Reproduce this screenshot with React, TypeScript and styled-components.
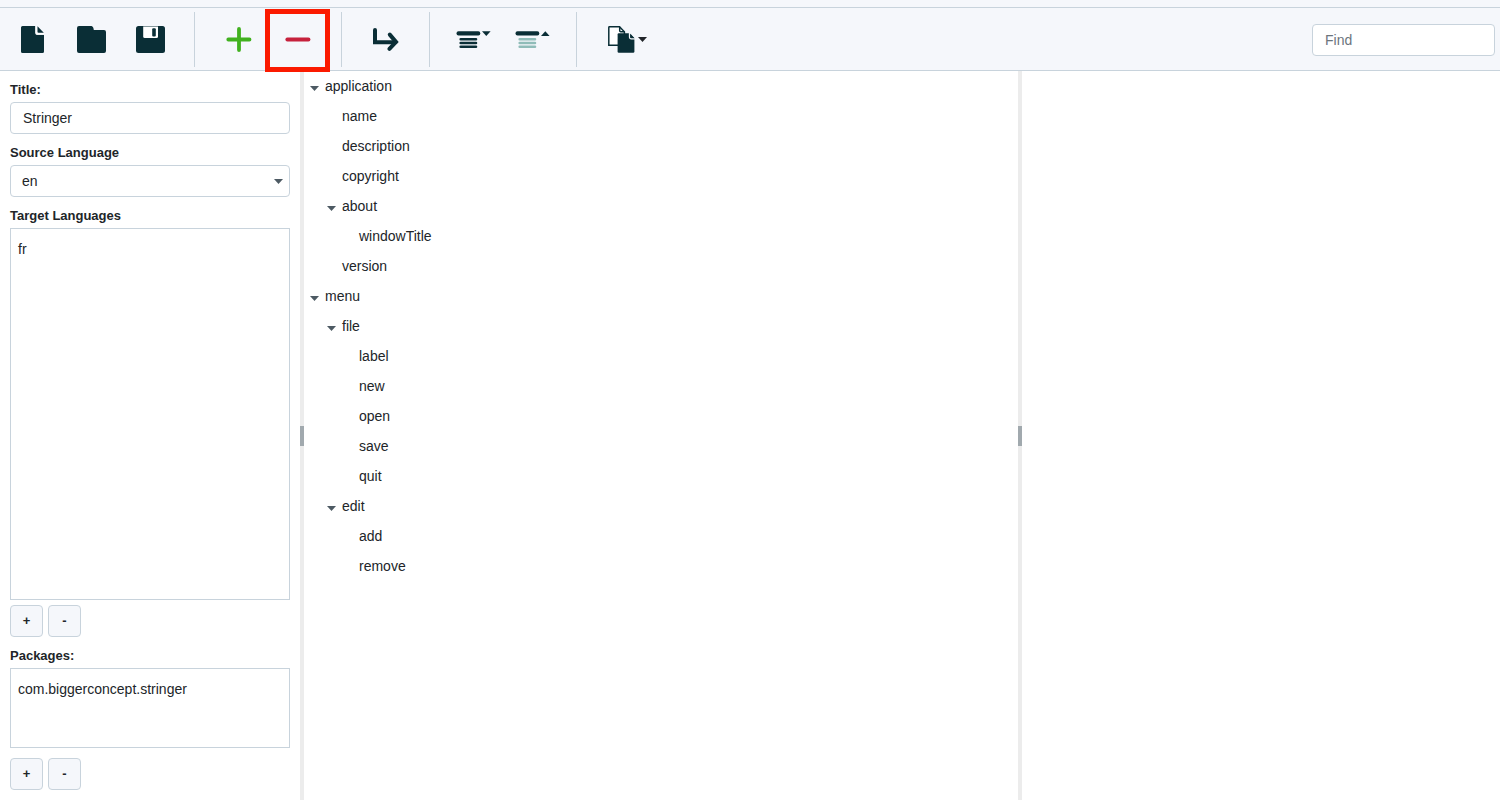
import React, { useState } from "react";
import styled, { createGlobalStyle, css } from "styled-components";

const line = "#c8d3dc";
const panel = "#f5f7fb";
const ink = "#212529";
const dark = "#0a2e36";
const mint = "#8fbcb8";

const GlobalStyle = createGlobalStyle`
  *, *::before, *::after { box-sizing: border-box; }
  body {
    margin: 0;
    background: #ffffff;
    color: ${ink};
    font-family: "Liberation Sans", Arial, sans-serif;
    font-size: 14px;
    line-height: 20px;
  }
  button, input, select { font: inherit; color: inherit; }
`;

const Page = styled.div`
  display: flex;
  flex-direction: column;
  min-height: 100vh;
`;

const TitleStrip = styled.div`
  height: 8px;
  background: ${panel};
  border-bottom: 1px solid ${line};
`;

const Toolbar = styled.header`
  display: flex;
  align-items: center;
  padding: 4px 5px 3px 3px;
  background: ${panel};
  border-bottom: 1px solid ${line};
`;

const ToolGroup = styled.div<{ $first?: boolean; $last?: boolean }>`
  display: flex;
  height: 55px;
  padding: 0 14px;
  ${(p) => p.$first && css`padding-left: 0;`}
  ${(p) => !p.$last && css`border-right: 1px solid ${line}; box-sizing: content-box;`}
`;

const ToolButton = styled.button<{ $wide?: boolean; $marked?: boolean }>`
  position: relative;
  display: flex;
  align-items: center;
  justify-content: center;
  gap: 2px;
  width: ${(p) => (p.$wide ? 73 : 59)}px;
  padding: 0;
  border: 0;
  background: none;
  cursor: pointer;

  ${(p) =>
    p.$marked &&
    css`
      &::after {
        content: "";
        position: absolute;
        z-index: 1;
        inset: -3px -3px -5px;
        border: 5px solid #fb1a00;
      }
    `}
`;

const fieldBox = css`
  height: 32px;
  border: 1px solid ${line};
  border-radius: 4px;
  background: #ffffff;
`;

const TextField = styled.input`
  ${fieldBox}
  width: 100%;
  padding: 0 12px;
  &::placeholder { color: #6c757d; opacity: 1; }
`;

const Search = styled.div`
  width: 183px;
  margin-left: auto;
`;

const Workspace = styled.div`
  flex: 1;
  display: grid;
  grid-template-columns: 300px 4px minmax(0, 1fr) 4px 478px;
`;

const Sidebar = styled.form`
  display: flex;
  flex-direction: column;
  padding: 0 10px 10px;
`;

const Label = styled.label`
  padding: 10px 0 3px;
  font-size: 13px;
  font-weight: bold;
  line-height: 18px;
`;

const SelectWrap = styled.div`
  position: relative;
  display: flex;
  svg { position: absolute; right: 7px; top: 14px; pointer-events: none; }
`;

const Select = styled.select`
  ${fieldBox}
  width: 100%;
  padding: 0 11px;
  appearance: none;
`;

const ListBox = styled.ul<{ $grow?: boolean }>`
  margin: 0;
  padding: 5px 7px;
  list-style: none;
  border: 1px solid ${line};
  ${(p) => (p.$grow ? css`flex: 1; min-height: 80px;` : css`height: 80px;`)}
`;

const ListItem = styled.li`
  line-height: 30px;
`;

const ButtonRow = styled.div<{ $space: number }>`
  display: flex;
  gap: 5px;
  padding-top: ${(p) => p.$space}px;
`;

const SmallButton = styled.button`
  ${fieldBox}
  width: 33px;
  padding: 0;
  background: ${panel};
  font-size: 13px;
  font-weight: bold;
`;

const Splitter = styled.div`
  display: flex;
  align-items: center;
  background: #ececec;
  cursor: col-resize;
  &::before {
    content: "";
    width: 4px;
    height: 20px;
    background: #a1a9ae;
  }
`;

const Tree = styled.ul`
  margin: 0;
  padding: 0 0 0 4px;
  list-style: none;
`;

const Branch = styled.ul`
  margin: 0;
  padding: 0 0 0 17px;
  list-style: none;
`;

const Row = styled.div`
  display: flex;
  align-items: center;
  height: 30px;
`;

const Toggle = styled.button<{ $open: boolean }>`
  display: flex;
  align-items: center;
  justify-content: center;
  width: 13px;
  height: 20px;
  margin-right: 4px;
  padding: 5px 0 0;
  border: 0;
  background: none;
  svg { transform: ${(p) => (p.$open ? "none" : "rotate(-90deg)")}; }
`;

const Leaf = styled.div`
  padding-left: 17px;
  line-height: 30px;
`;

const Caret = ({ color = "#4d5a63" }: { color?: string }) => (
  <svg width="9" height="5" viewBox="0 0 9 5" aria-hidden="true">
    <path d="M0 0H9L4.5 5Z" fill={color} />
  </svg>
);

const NewIcon = () => (
  <svg width="23" height="27" viewBox="0 0 23 27" aria-hidden="true">
    <path d="M1.5 0H14.5V7.2Q14.5 8.8 16 8.8H23V25.5Q23 27 21.5 27H1.5Q0 27 0 25.5V1.5Q0 0 1.5 0Z" fill={dark} />
    <path d="M15 0V6.7Q15 8 16.3 8H23" fill="none" stroke="#ffffff" strokeWidth="1.4" />
    <path d="M16.5 0.3L22.8 6.8H17.5Q16.5 6.8 16.5 5.8Z" fill={dark} />
  </svg>
);

const OpenIcon = () => (
  <svg width="29" height="27" viewBox="0 0 29 27" aria-hidden="true">
    <path d="M2 0H14.5Q16.5 0.4 16.8 4H27Q29 4 29 6V25Q29 27 27 27H2Q0 27 0 25V2Q0 0 2 0Z" fill={dark} />
  </svg>
);

const SaveIcon = () => (
  <svg width="29" height="27" viewBox="0 0 29 27" aria-hidden="true">
    <rect width="29" height="27" rx="2.5" fill={dark} />
    <path d="M7.2 0.5H22V10.5Q22 12 20.5 12H8.7Q7.2 12 7.2 10.5Z" fill="#ffffff" />
    <rect x="16.2" y="2.2" width="3.6" height="8.3" rx="1" fill={dark} />
  </svg>
);

const AddIcon = () => (
  <svg width="27" height="27" viewBox="0 0 27 27" aria-hidden="true">
    <path d="M14 3V24M3.3 13.5H24.5" fill="none" stroke="#41b11f" strokeWidth="3.8" strokeLinecap="round" />
  </svg>
);

const RemoveIcon = () => (
  <svg width="27" height="27" viewBox="0 0 27 27" aria-hidden="true">
    <path d="M3.3 13.5H24.5" fill="none" stroke="#c6213c" strokeWidth="3.8" strokeLinecap="round" />
  </svg>
);

const MoveIcon = () => (
  <svg width="27" height="27" viewBox="0 0 27 27" aria-hidden="true">
    <g fill="none" stroke={dark} strokeWidth="4" strokeLinecap="round">
      <path d="M3 4V16.3H23.5" />
      <path d="M17.8 8.6L24 15.9L17.4 22.8" />
    </g>
  </svg>
);

const LinesIcon = ({ up, color }: { up?: boolean; color: string }) => (
  <svg width="36" height="27" viewBox="0 0 36 27" aria-hidden="true">
    <rect x="0.5" y="5.3" width="23.8" height="4.2" rx="2" fill={dark} />
    <path d={up ? "M26 10H34.6L30.3 5.3Z" : "M26 5.3H34.6L30.3 10Z"} fill={dark} />
    <path d="M4.7 13.3H20M4.7 17H20M4.7 20.7H20" stroke={color} strokeWidth="2.6" strokeLinecap="round" />
  </svg>
);

const CopyIcon = () => (
  <svg width="28" height="27" viewBox="0 0 28 27" aria-hidden="true">
    <path d="M1.4 0.8H11.5L16.4 5.8V19.2H0.8V1.4Q0.8 0.8 1.4 0.8Z" fill="#ffffff" stroke={dark} strokeWidth="1.5" />
    <path d="M11.7 0.8V4.8Q11.7 5.8 12.7 5.8H16.4" fill="none" stroke={dark} strokeWidth="1.5" />
    <path d="M10.8 7.3H21.5L26.4 12.3V25.6Q26.4 26.8 25.2 26.8H10.8Q9.6 26.8 9.6 25.6V8.5Q9.6 7.3 10.8 7.3Z" fill={dark} />
    <path d="M21.5 6.5V11.3Q21.5 12.8 23 12.8H27" fill="none" stroke={panel} strokeWidth="1.3" />
    <path d="M21.9 6.4L27.4 12V6.4Z" fill={panel} />
    <path d="M22.4 7.8L26.3 11.9H23.2Q22.4 11.9 22.4 11.1Z" fill={dark} />
  </svg>
);

type Node = { name: string; children?: Node[] };

const strings: Node[] = [
  {
    name: "application",
    children: [
      { name: "name" },
      { name: "description" },
      { name: "copyright" },
      { name: "about", children: [{ name: "windowTitle" }] },
      { name: "version" },
    ],
  },
  {
    name: "menu",
    children: [
      {
        name: "file",
        children: [{ name: "label" }, { name: "new" }, { name: "open" }, { name: "save" }, { name: "quit" }],
      },
      { name: "edit", children: [{ name: "add" }, { name: "remove" }] },
    ],
  },
];

function TreeNode({ node }: { node: Node }) {
  const [open, setOpen] = useState(true);
  if (!node.children) {
    return (
      <li>
        <Leaf>{node.name}</Leaf>
      </li>
    );
  }
  return (
    <li>
      <Row>
        <Toggle type="button" $open={open} aria-expanded={open} aria-label={`Toggle ${node.name}`} onClick={() => setOpen(!open)}>
          <Caret />
        </Toggle>
        <span>{node.name}</span>
      </Row>
      {open && (
        <Branch>
          {node.children.map((child) => (
            <TreeNode key={child.name} node={child} />
          ))}
        </Branch>
      )}
    </li>
  );
}

export default function App() {
  return (
    <Page>
      <GlobalStyle />
      <TitleStrip />
      <Toolbar>
        <ToolGroup $first>
          <ToolButton type="button" aria-label="New"><NewIcon /></ToolButton>
          <ToolButton type="button" aria-label="Open"><OpenIcon /></ToolButton>
          <ToolButton type="button" aria-label="Save"><SaveIcon /></ToolButton>
        </ToolGroup>
        <ToolGroup>
          <ToolButton type="button" aria-label="Add"><AddIcon /></ToolButton>
          <ToolButton type="button" aria-label="Remove" $marked><RemoveIcon /></ToolButton>
        </ToolGroup>
        <ToolGroup>
          <ToolButton type="button" aria-label="Move"><MoveIcon /></ToolButton>
        </ToolGroup>
        <ToolGroup>
          <ToolButton type="button" aria-label="Expand all"><LinesIcon color={dark} /></ToolButton>
          <ToolButton type="button" aria-label="Collapse all"><LinesIcon up color={mint} /></ToolButton>
        </ToolGroup>
        <ToolGroup $last>
          <ToolButton type="button" aria-label="Copy" $wide>
            <CopyIcon />
            <Caret color={ink} />
          </ToolButton>
        </ToolGroup>
        <Search>
          <TextField type="text" placeholder="Find" aria-label="Find" />
        </Search>
      </Toolbar>
      <Workspace>
        <Sidebar>
          <Label htmlFor="title">Title:</Label>
          <TextField id="title" type="text" defaultValue="Stringer" />
          <Label htmlFor="source">Source Language</Label>
          <SelectWrap>
            <Select id="source" defaultValue="en">
              <option value="en">en</option>
            </Select>
            <Caret />
          </SelectWrap>
          <Label as="div" id="targets">Target Languages</Label>
          <ListBox $grow aria-labelledby="targets">
            <ListItem>fr</ListItem>
          </ListBox>
          <ButtonRow $space={5}>
            <SmallButton type="button" aria-label="Add language">+</SmallButton>
            <SmallButton type="button" aria-label="Remove language">-</SmallButton>
          </ButtonRow>
          <Label as="div" id="packages">Packages:</Label>
          <ListBox aria-labelledby="packages">
            <ListItem>com.biggerconcept.stringer</ListItem>
          </ListBox>
          <ButtonRow $space={10}>
            <SmallButton type="button" aria-label="Add package">+</SmallButton>
            <SmallButton type="button" aria-label="Remove package">-</SmallButton>
          </ButtonRow>
        </Sidebar>
        <Splitter role="separator" aria-orientation="vertical" />
        <Tree>
          {strings.map((node) => (
            <TreeNode key={node.name} node={node} />
          ))}
        </Tree>
        <Splitter role="separator" aria-orientation="vertical" />
        <main />
      </Workspace>
    </Page>
  );
}
